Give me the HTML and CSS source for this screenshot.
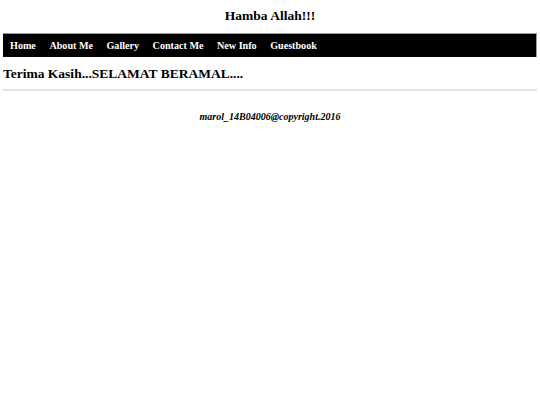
FILE: index.html
```html
<!DOCTYPE html>
<html>
<head>
<meta charset="utf-8">
<link rel="stylesheet" href="styles.css">
</head>
<body>
<div class="page">
  <h1 class="title">Hamba Allah!!!</h1>
  <ul class="nav">
    <li><a href="#">Home</a></li>
    <li><a href="#">About Me</a></li>
    <li><a href="#">Gallery</a></li>
    <li><a href="#">Contact Me</a></li>
    <li><a href="#">New Info</a></li>
    <li><a href="#">Guestbook</a></li>
  </ul>
  <h2 class="thanks">Terima Kasih...SELAMAT BERAMAL....</h2>
  <hr class="rule">
  <p class="footer">marol_14B04006@copyright.2016</p>
</div>
</body>
</html>
```
FILE: styles.css
```css
html, body {
  margin: 0;
  padding: 0;
  background: #fff;
}
.page {
  padding: 0 3px;
  font-family: "Liberation Serif", "Times New Roman", serif;
  color: #000;
}
.title {
  margin: 0;
  padding-top: 8px;
  height: 25px;
  text-align: center;
  font-size: 13.5px;
  font-weight: bold;
  line-height: 16px;
}
.nav {
  list-style: none;
  margin: 0;
  padding: 0;
  display: flex;
  background: #000;
  border-top: 1px solid #9a9a9a;
  border-right: 1px solid #9a9a9a;
  height: 23px;
  align-items: center;
}
.nav li a {
  display: block;
  padding: 0 6.5px 0 7px;
  color: #fff;
  text-decoration: none;
  font-weight: bold;
  font-size: 10.15px;
  line-height: 23px;
}
.thanks {
  margin: 0;
  padding-top: 8px;
  font-size: 13.5px;
  line-height: 18px;
  font-weight: bold;
}
.rule {
  margin: 6px 0 0 0;
  border: 0;
  border-top: 2px solid #e2e2e2;
  height: 0;
}
.footer {
  margin: 19px 0 0 0;
  text-align: center;
  font-style: italic;
  font-weight: bold;
  font-size: 10px;
  line-height: 14px;
}
```
